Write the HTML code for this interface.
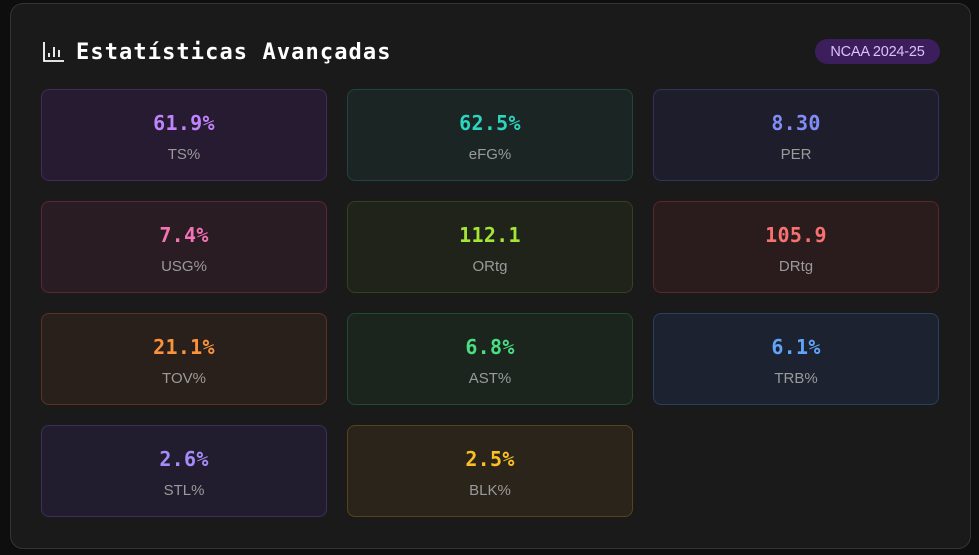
<!DOCTYPE html>
<html><head><meta charset="utf-8"><style>
*{margin:0;padding:0;box-sizing:border-box}
html,body{width:979px;height:555px;background:#0e0e0e;overflow:hidden}
.panel{position:absolute;left:10px;top:3px;width:961px;height:546px;background:#1a1a1a;border:1px solid #333;border-radius:13px}
.title{position:absolute;left:76px;top:40px;font:bold 22px "DejaVu Sans Mono",monospace;color:#fff;letter-spacing:1.1px}
.icon{position:absolute;left:43px;top:41px}
.badge{position:absolute;left:815px;top:39px;width:125px;height:25px;border-radius:13px;background:#3d1e5c;color:#dcc0fb;font:14.5px "Liberation Sans",sans-serif;text-align:center;line-height:26px;letter-spacing:-0.2px}
.c{position:absolute;width:286px;height:92px;border-radius:8px;border:1px solid;text-align:center}
.v{position:absolute;left:0;right:0;top:21px;font:bold 20px "DejaVu Sans Mono",monospace;letter-spacing:0.3px}
.l{position:absolute;left:0;right:0;top:56px;font:15px "Liberation Sans",sans-serif;color:#9a9a9a}
</style></head><body>
<div class="panel"></div>
<svg class="icon" width="22" height="22" viewBox="0 0 22 22" fill="none" stroke="#fff" stroke-width="1.8"><path d="M1 1V20H21M6 16V12M11 16V6M16 16V9"/></svg>
<div class="title">Estatísticas Avançadas</div>
<div class="badge">NCAA 2024-25</div>

<div class="c" style="left:41px;top:89px;background:#261b31;border-color:#43295c"><div class="v" style="color:#c084fc">61.9%</div><div class="l">TS%</div></div>
<div class="c" style="left:347px;top:89px;background:#1a2524;border-color:#1f4640"><div class="v" style="color:#2dd4bf">62.5%</div><div class="l">eFG%</div></div>
<div class="c" style="left:653px;top:89px;background:#1e1d2c;border-color:#34315c"><div class="v" style="color:#818cf8">8.30</div><div class="l">PER</div></div>

<div class="c" style="left:41px;top:201px;background:#2a1c23;border-color:#5a2739"><div class="v" style="color:#f472b6">7.4%</div><div class="l">USG%</div></div>
<div class="c" style="left:347px;top:201px;background:#1f231a;border-color:#33421f"><div class="v" style="color:#a3e635">112.1</div><div class="l">ORtg</div></div>
<div class="c" style="left:653px;top:201px;background:#2a1c1c;border-color:#5a2828"><div class="v" style="color:#f87171">105.9</div><div class="l">DRtg</div></div>

<div class="c" style="left:41px;top:313px;background:#2a201b;border-color:#5a3320"><div class="v" style="color:#fb923c">21.1%</div><div class="l">TOV%</div></div>
<div class="c" style="left:347px;top:313px;background:#1b251e;border-color:#224a2e"><div class="v" style="color:#4ade80">6.8%</div><div class="l">AST%</div></div>
<div class="c" style="left:653px;top:313px;background:#1c2230;border-color:#28405f"><div class="v" style="color:#60a5fa">6.1%</div><div class="l">TRB%</div></div>

<div class="c" style="left:41px;top:425px;background:#221d2e;border-color:#3c2f5e"><div class="v" style="color:#a78bfa">2.6%</div><div class="l">STL%</div></div>
<div class="c" style="left:347px;top:425px;background:#2a241b;border-color:#57421c"><div class="v" style="color:#fbbf24">2.5%</div><div class="l">BLK%</div></div>
</body></html>
